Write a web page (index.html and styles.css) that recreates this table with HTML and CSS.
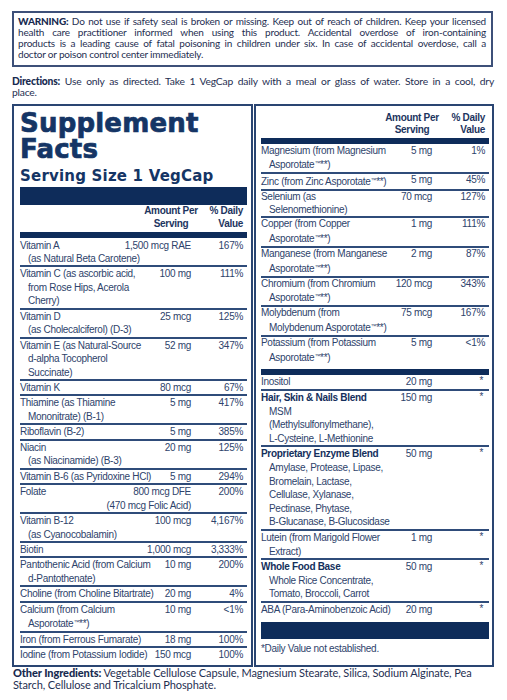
FILE: index.html
```html
<!DOCTYPE html>
<html lang="en">
<head>
  <meta charset="UTF-8" />
  <meta name="viewport" content="width=device-width, initial-scale=1" />
  <title>Supplement Facts</title>
  <link rel="stylesheet" href="styles.css">
</head>
<body>
<div class="label">

  <div class="warning">
    <span class="ln"><b>WARNING:</b> Do not use if safety seal is broken or missing. Keep out of reach of children. Keep your licensed</span>
    <span class="ln">health care practitioner informed when using this product. Accidental overdose of iron-containing</span>
    <span class="ln">products is a leading cause of fatal poisoning in children under six. In case of accidental overdose, call a</span>
    <span class="ln last">doctor or poison control center immediately.</span>
  </div>

  <div class="directions">
    <span class="ln"><b>Directions:</b> Use only as directed. Take 1 VegCap daily with a meal or glass of water. Store in a cool, dry</span>
    <span class="ln last">place.</span>
  </div>

  <div class="facts">
    <section class="panel left">
      <h1 class="title">Supplement<br>Facts</h1>
      <div class="serving">Serving Size 1 VegCap</div>
      <div class="bar thick"></div>
      <div class="row head">
        <div></div>
        <div class="amt">Amount Per<br>Serving</div>
        <div class="dv">% Daily<br>Value</div>
      </div>
      <div class="bar"></div>

      <div class="row first"><div class="nm">Vitamin A<br>(as Natural Beta Carotene)</div><div class="amt">1,500 mcg RAE</div><div class="dv">167%</div></div>
      <div class="row"><div class="nm">Vitamin C (as ascorbic acid,<br>from Rose Hips, Acerola<br>Cherry)</div><div class="amt">100 mg</div><div class="dv">111%</div></div>
      <div class="row"><div class="nm">Vitamin D<br>(as Cholecalciferol) (D-3)</div><div class="amt">25 mcg</div><div class="dv">125%</div></div>
      <div class="row"><div class="nm">Vitamin E (as Natural-Source<br>d-alpha Tocopherol<br>Succinate)</div><div class="amt">52 mg</div><div class="dv">347%</div></div>
      <div class="row"><div class="nm">Vitamin K</div><div class="amt">80 mcg</div><div class="dv">67%</div></div>
      <div class="row"><div class="nm">Thiamine (as Thiamine<br>Mononitrate) (B-1)</div><div class="amt">5 mg</div><div class="dv">417%</div></div>
      <div class="row"><div class="nm">Riboflavin (B-2)</div><div class="amt">5 mg</div><div class="dv">385%</div></div>
      <div class="row"><div class="nm">Niacin<br>(as Niacinamide) (B-3)</div><div class="amt">20 mg</div><div class="dv">125%</div></div>
      <div class="row"><div class="nm">Vitamin B-6 (as Pyridoxine HCl)</div><div class="amt">5 mg</div><div class="dv">294%</div></div>
      <div class="row"><div class="nm">Folate</div><div class="amt">800 mcg DFE</div><div class="dv">200%</div><div class="note">(470 mcg Folic Acid)</div></div>
      <div class="row"><div class="nm">Vitamin B-12<br>(as Cyanocobalamin)</div><div class="amt">100 mcg</div><div class="dv">4,167%</div></div>
      <div class="row"><div class="nm">Biotin</div><div class="amt">1,000 mcg</div><div class="dv">3,333%</div></div>
      <div class="row"><div class="nm">Pantothenic Acid (from Calcium<br>d-Pantothenate)</div><div class="amt">10 mg</div><div class="dv">200%</div></div>
      <div class="row"><div class="nm">Choline (from Choline Bitartrate)</div><div class="amt">20 mg</div><div class="dv">4%</div></div>
      <div class="row"><div class="nm">Calcium (from Calcium<br>Asporotate<small>™</small>**)</div><div class="amt">10 mg</div><div class="dv">&lt;1%</div></div>
      <div class="row"><div class="nm">Iron (from Ferrous Fumarate)</div><div class="amt">18 mg</div><div class="dv">100%</div></div>
      <div class="row"><div class="nm">Iodine (from Potassium Iodide)</div><div class="amt">150 mcg</div><div class="dv">100%</div></div>
    </section>

    <section class="panel right">
      <div class="row head">
        <div></div>
        <div class="amt">Amount Per<br>Serving</div>
        <div class="dv">% Daily<br>Value</div>
      </div>
      <div class="bar"></div>

      <div class="row first"><div class="nm">Magnesium (from Magnesium<br>Asporotate<small>™</small>**)</div><div class="amt">5 mg</div><div class="dv">1%</div></div>
      <div class="row"><div class="nm">Zinc (from Zinc Asporotate<small>™</small>**)</div><div class="amt">5 mg</div><div class="dv">45%</div></div>
      <div class="row"><div class="nm">Selenium (as<br>Selenomethionine)</div><div class="amt">70 mcg</div><div class="dv">127%</div></div>
      <div class="row"><div class="nm">Copper (from Copper<br>Asporotate<small>™</small>**)</div><div class="amt">1 mg</div><div class="dv">111%</div></div>
      <div class="row"><div class="nm">Manganese (from Manganese<br>Asporotate<small>™</small>**)</div><div class="amt">2 mg</div><div class="dv">87%</div></div>
      <div class="row"><div class="nm">Chromium (from Chromium<br>Asporotate<small>™</small>**)</div><div class="amt">120 mcg</div><div class="dv">343%</div></div>
      <div class="row"><div class="nm">Molybdenum (from<br>Molybdenum Asporotate<small>™</small>**)</div><div class="amt">75 mcg</div><div class="dv">167%</div></div>
      <div class="row end"><div class="nm">Potassium (from Potassium<br>Asporotate<small>™</small>**)</div><div class="amt">5 mg</div><div class="dv">&lt;1%</div></div>
      <div class="bar"></div>

      <div class="group">
        <div class="row"><div class="nm">Inositol</div><div class="amt">20 mg</div><div class="dv star">*</div></div>
        <div class="row"><div class="nm"><b>Hair, Skin &amp; Nails Blend</b><br>MSM<br>(Methylsulfonylmethane),<br>L-Cysteine, L-Methionine</div><div class="amt">150 mg</div><div class="dv star">*</div></div>
        <div class="row"><div class="nm"><b>Proprietary Enzyme Blend</b><br>Amylase, Protease, Lipase,<br>Bromelain, Lactase,<br>Cellulase, Xylanase,<br>Pectinase, Phytase,<br>B-Glucanase, B-Glucosidase</div><div class="amt">50 mg</div><div class="dv star">*</div></div>
        <div class="row"><div class="nm">Lutein (from Marigold Flower<br>Extract)</div><div class="amt">1 mg</div><div class="dv star">*</div></div>
        <div class="row"><div class="nm"><b>Whole Food Base</b><br>Whole Rice Concentrate,<br>Tomato, Broccoli, Carrot</div><div class="amt">50 mg</div><div class="dv star">*</div></div>
        <div class="row end"><div class="nm">ABA (Para-Aminobenzoic Acid)</div><div class="amt">20 mg</div><div class="dv star">*</div></div>
      </div>
      <div class="bar thick"></div>
      <p class="foot">*Daily Value not established.</p>
    </section>
  </div>

  <p class="other"><b>Other Ingredients:</b> Vegetable Cellulose Capsule, Magnesium Stearate, Silica, Sodium Alginate, Pea<br>Starch, Cellulose and Tricalcium Phosphate.</p>

</div>
</body>
</html>
```

FILE: styles.css
```css
body {
  margin: 0;
  background-color: #fff;
}
.label {
  width: 507px;
  box-sizing: border-box;
  padding: 11px 13px 0 12px;
  color: #1f2f52;
  font-family: Lato, "Open Sans", sans-serif;
}

/* warning + directions */
.warning {
  border: 2px solid #3d5079;
  margin-right: 1px;
  padding: 3px 5px 5px 4px;
  font-size: 10px;
  line-height: 11px;
  letter-spacing: -0.2px;
  word-spacing: -1.5px;
}
.ln {
  display: block;
  text-align: justify;
  text-align-last: justify;
}
.ln.last {
  text-align-last: left;
  word-spacing: 0;
}
.warning b,
.directions b,
.other b {
  color: #172a4f;
  font-weight: 900;
}
.directions {
  margin-top: 9px;
  font-size: 10.3px;
  line-height: 11px;
  letter-spacing: -0.2px;
  word-spacing: -1px;
}

/* facts panels */
.facts {
  display: grid;
  grid-template-columns: 241px 240px;
  gap: 1px;
  margin-top: 6px;
}
.panel {
  border: 2px solid #2a4572;
  font-family: "Liberation Sans", Arial, sans-serif;
  font-size: 10px;
  letter-spacing: -0.3px;
  color: #2e436b;
}
.left {
  padding: 3.5px 4px 3px 6px;
  --amt: 40px;
  --dv: 52px;
}
.right {
  padding: 6px 3px 0 5px;
  --amt: 40px;
  --dv: 53px;
}
.title {
  margin: 0;
  font-family: "DejaVu Sans", sans-serif;
  font-weight: bold;
  font-size: 26px;
  line-height: 26px;
  letter-spacing: 0.2px;
  color: #153565;
  -webkit-text-stroke: 0.7px #153565;
}
.serving {
  margin-top: 4px;
  font-family: "DejaVu Sans", sans-serif;
  font-weight: bold;
  font-size: 15px;
  line-height: 20px;
  letter-spacing: 0.2px;
  color: #153565;
}
.bar {
  height: 6px;
  background-color: #0e2c5a;
}
.bar.thick {
  height: 17.5px;
}
.left .bar.thick {
  margin-top: 1.5px;
}

.row {
  display: grid;
  grid-template-columns: minmax(0, 1fr) var(--amt) var(--dv);
  line-height: 13.45px;
  border-bottom: 2px solid #2f4c7a;
  padding-right: 4px;
}
.right .row {
  line-height: 12.8px;
}
.row.first {
  padding-top: 1px;
}
.left .row:last-child,
.row.end {
  border-bottom: 0;
}
.row.end {
  padding-bottom: 5px;
}
.nm {
  white-space: nowrap;
  padding-left: 8px;
  text-indent: -8px;
}
.nm b {
  color: #142f5c;
}
.amt {
  display: flex;
  justify-content: flex-end;
  white-space: nowrap;
}
.dv {
  text-align: right;
  white-space: nowrap;
}
.star {
  padding-right: 2px;
  line-height: 11px;
}
.note {
  grid-column: 1 / 3;
  text-align: right;
}
.row small {
  font-size: 6px;
  vertical-align: 3px;
}
.head {
  border-bottom: 0;
  font-weight: bold;
  color: #1d3560;
  line-height: 12.5px;
  padding-top: 0.5px;
  padding-bottom: 1.5px;
}
.right .head {
  line-height: 12px;
  padding-top: 0;
  padding-bottom: 1.5px;
}
.head .amt {
  justify-content: center;
  text-align: center;
}
.right .group .row {
  line-height: 13.6px;
}
.foot {
  margin: 2.5px 0 0;
  line-height: 13px;
}

.other {
  margin: 0 0 0 1px;
  font-size: 11px;
  line-height: 12.5px;
  letter-spacing: -0.1px;
}
```
